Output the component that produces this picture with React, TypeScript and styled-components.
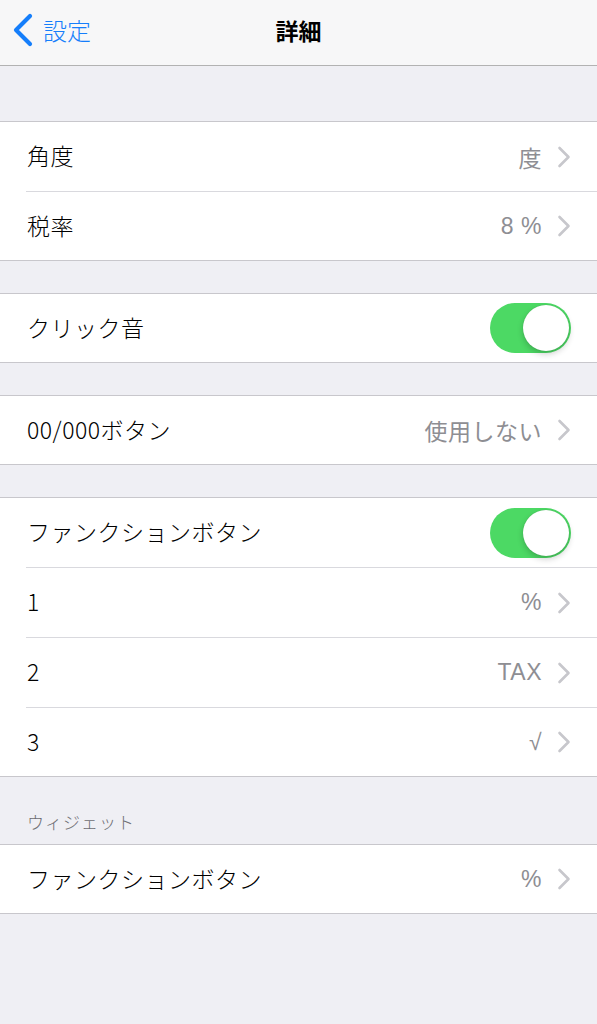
import React from "react";
import styled, { createGlobalStyle } from "styled-components";

const GlobalStyle = createGlobalStyle`
  html, body {
    margin: 0;
    padding: 0;
    background: #efeff4;
  }
  body {
    font-family: "Noto Sans CJK JP", "Noto Sans", sans-serif;
    -webkit-font-smoothing: antialiased;
  }
`;

type Row =
  | { kind: "link"; label: string; value: string }
  | { kind: "toggle"; label: string; on: boolean };

interface Group {
  header?: string;
  rows: Row[];
}

const groups: Group[] = [
  {
    rows: [
      { kind: "link", label: "角度", value: "度" },
      { kind: "link", label: "税率", value: "8 %" },
    ],
  },
  { rows: [{ kind: "toggle", label: "クリック音", on: true }] },
  { rows: [{ kind: "link", label: "00/000ボタン", value: "使用しない" }] },
  {
    rows: [
      { kind: "toggle", label: "ファンクションボタン", on: true },
      { kind: "link", label: "1", value: "%" },
      { kind: "link", label: "2", value: "TAX" },
      { kind: "link", label: "3", value: "√" },
    ],
  },
  {
    header: "ウィジェット",
    rows: [{ kind: "link", label: "ファンクションボタン", value: "%" }],
  },
];

const Chevron = () => (
  <svg width="14" height="22" viewBox="0 0 14 22">
    <path
      d="M2.5 2 L11.5 11 L2.5 20"
      fill="none"
      stroke="#c7c7cc"
      strokeWidth="2.6"
      strokeLinecap="round"
      strokeLinejoin="round"
    />
  </svg>
);

const BackChevron = () => (
  <svg width="22" height="34" viewBox="0 0 22 34">
    <path
      d="M18 3 L4 17 L18 31"
      fill="none"
      stroke="#157efb"
      strokeWidth="4.2"
      strokeLinecap="round"
      strokeLinejoin="round"
    />
  </svg>
);

const App: React.FC = () => {
  return (
    <>
      <GlobalStyle />
      <Page>
        <NavBar>
          <BackButton>
            <BackChevron />
            <BackLabel>設定</BackLabel>
          </BackButton>
          <Title>詳細</Title>
        </NavBar>
        <Content>
          {groups.map((group, gi) => (
            <Section key={gi} $first={gi === 0} $hasHeader={!!group.header}>
              {group.header && <SectionHeader>{group.header}</SectionHeader>}
              <Cells>
                {group.rows.map((row, ri) => (
                  <Cell key={ri} $last={ri === group.rows.length - 1}>
                    <Label>{row.label}</Label>
                    {row.kind === "link" ? (
                      <Accessory>
                        <Value>{row.value}</Value>
                        <Chevron />
                      </Accessory>
                    ) : (
                      <Toggle $on={row.on}>
                        <Knob $on={row.on} />
                      </Toggle>
                    )}
                  </Cell>
                ))}
              </Cells>
            </Section>
          ))}
        </Content>
      </Page>
    </>
  );
};

const Page = styled.div`
  width: 597px;
  min-height: 1024px;
  background: #efeff4;
`;

const NavBar = styled.div`
  height: 65px;
  background: #f7f7f8;
  border-bottom: 1px solid #b2b2b2;
  display: flex;
  align-items: center;
  justify-content: center;
  position: relative;
`;

const BackButton = styled.div`
  position: absolute;
  left: 12px;
  top: 13px;
  display: flex;
  align-items: center;
  gap: 9px;
`;

const BackLabel = styled.span`
  font-size: 24px;
  font-weight: 300;
  color: #157efb;
  line-height: 34px;
`;

const Title = styled.div`
  font-size: 23px;
  font-weight: 700;
  color: #000;
  margin-top: -5px;
`;

const Content = styled.div`
  display: flex;
  flex-direction: column;
`;

const Section = styled.div<{ $first?: boolean; $hasHeader?: boolean }>`
  margin-top: ${({ $first, $hasHeader }) =>
    $first ? "55px" : $hasHeader ? "0" : "32px"};
`;

const SectionHeader = styled.div`
  padding: 32px 27px 10px;
  font-size: 17px;
  font-weight: 300;
  line-height: 25px;
  color: #6d6d72;
  letter-spacing: 1px;
`;

const Cells = styled.div`
  background: #fff;
  border-top: 1px solid #c8c7cc;
  border-bottom: 1px solid #c8c7cc;
`;

const Cell = styled.div<{ $last?: boolean }>`
  height: ${({ $last }) => ($last ? "65px" : "66px")};
  margin-left: 26px;
  padding-right: 26px;
  padding-bottom: 3px;
  display: flex;
  align-items: center;
  justify-content: space-between;
  border-bottom: ${({ $last }) => ($last ? "none" : "1px solid #d9d9de")};
`;

const Label = styled.span`
  font-size: 23px;
  font-weight: 300;
  color: #000;
  letter-spacing: 0.5px;
  padding-left: 1px;
`;

const Accessory = styled.div`
  display: flex;
  align-items: center;
  gap: 15px;
  margin-top: 3px;
`;

const Value = styled.span`
  font-family: "Liberation Sans", "Noto Sans CJK JP", sans-serif;
  font-size: 23px;
  color: #8e8e93;
  letter-spacing: 0.5px;
`;

const Toggle = styled.div<{ $on?: boolean }>`
  width: 81px;
  height: 50px;
  border-radius: 25px;
  background: ${({ $on }) => ($on ? "#4cd964" : "#e5e5ea")};
  position: relative;
  margin-top: 3px;
`;

const Knob = styled.div<{ $on?: boolean }>`
  position: absolute;
  top: 2px;
  left: ${({ $on }) => ($on ? "33px" : "2px")};
  width: 46px;
  height: 46px;
  border-radius: 50%;
  background: #fff;
  box-shadow: 0 3px 6px rgba(0, 0, 0, 0.2), 0 0 1px rgba(0, 0, 0, 0.2);
`;

export default App;
